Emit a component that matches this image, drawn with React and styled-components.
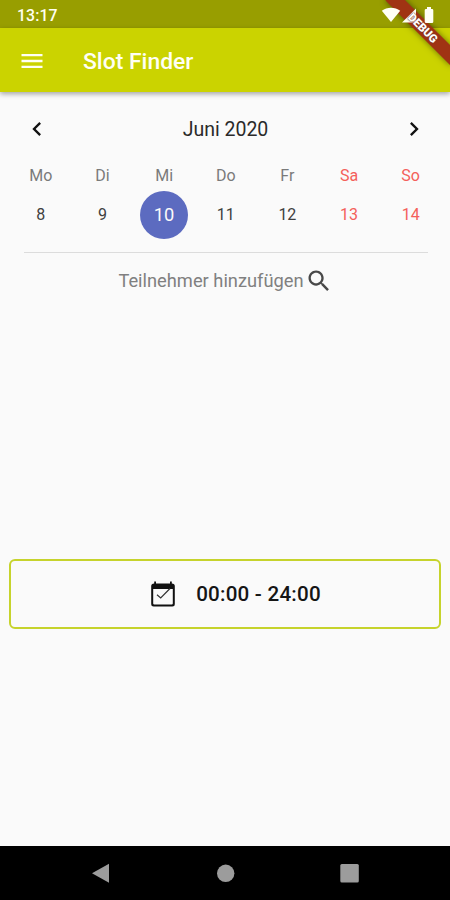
import styled, { createGlobalStyle } from 'styled-components';

const GlobalStyle = createGlobalStyle`
  * {
    box-sizing: border-box;
  }

  body {
    margin: 0;
    background-color: #fafafa;
    font-family: Roboto, sans-serif;
  }
`;

const Screen = styled.div`
  position: relative;
  display: flex;
  flex-direction: column;
  width: 450px;
  height: 900px;
  overflow: hidden;
  background-color: #fafafa;
`;

const StatusBar = styled.div`
  display: flex;
  justify-content: space-between;
  align-items: center;
  height: 28px;
  padding: 2px 15px 0 17px;
  background-color: #989e00;
  color: #fffff0;
`;

const Clock = styled.span`
  font-size: 15.8px;
  font-weight: 500;
  letter-spacing: 0.1px;
`;

/* the system icons are painted over the debug banner */
const StatusIcons = styled.svg`
  position: relative;
  z-index: 2;
  display: block;
  width: 54px;
  height: 18px;
`;

const AppBar = styled.header`
  display: flex;
  align-items: center;
  flex-shrink: 0;
  height: 64px;
  padding: 1px 18px 0;
  background-color: #cbd300;
  box-shadow: 0 2px 5px rgba(0, 0, 0, 0.35);
`;

const Title = styled.h1`
  margin: 1px 0 0 37px;
  color: #fffff4;
  font-size: 22.9px;
  font-weight: 500;
`;

const Icon = styled.svg`
  display: block;
  flex-shrink: 0;
  width: 28px;
  height: 28px;
  fill: ${(props) => props.$color || '#111'};
`;

const DebugBanner = styled.div`
  position: absolute;
  z-index: 1;
  top: 20.5px;
  right: -18.5px;
  width: 92px;
  height: 14px;
  transform: rotate(45deg);
  background-color: #a03313;
  box-shadow: 0 0 6px rgba(0, 0, 0, 0.5);
`;

const DebugLabel = styled(DebugBanner)`
  z-index: 3;
  background-color: transparent;
  box-shadow: none;
  color: #fff;
  font-size: 11.4px;
  font-weight: 900;
  line-height: 14px;
  text-align: center;
  text-shadow: 0 0 1px #7a3a30, 0 0 2px #7a3a30;
`;

const Content = styled.main`
  display: flex;
  flex-direction: column;
  flex: 1;
  padding: 23px 9px 0;
`;

const MonthRow = styled.div`
  display: flex;
  justify-content: space-between;
  align-items: center;
  height: 28px;
  padding: 0 13px 0 14px;
`;

const MonthLabel = styled.div`
  color: #2a2a2a;
  font-size: 19.5px;
`;

const Week = styled.div`
  display: grid;
  grid-template-columns: repeat(7, 1fr);
  align-items: center;
  justify-items: center;
  padding-left: 1px;
  margin-right: -0.5px;
`;

const WeekDays = styled(Week)`
  height: 24px;
  margin-top: 20px;
`;

const Days = styled(Week)`
  height: 48px;
  margin-top: 3.5px;
`;

const WeekDay = styled.span`
  color: ${(props) => (props.$weekend ? '#f4605b' : '#7a7a7a')};
  font-size: 16px;
`;

const Day = styled.span`
  display: flex;
  justify-content: center;
  align-items: center;
  width: 48px;
  height: 48px;
  border-radius: 50%;
  background-color: ${(props) => (props.$selected ? '#5c6bc0' : 'transparent')};
  color: ${(props) => (props.$selected ? '#fafafa' : props.$weekend ? '#f4605b' : '#404040')};
  font-size: ${(props) => (props.$selected ? '18.3px' : '16px')};
`;

const Divider = styled.hr`
  width: 404px;
  height: 1px;
  margin: 13.5px 13px 0 15px;
  border: 0;
  background-color: #dcdcdc;
`;

const SearchRow = styled.div`
  display: flex;
  justify-content: center;
  align-items: center;
  height: 28px;
  margin-top: 13px;
  color: #808080;
  font-size: 18.3px;

  svg {
    margin: 1px -1px 0 1px;
  }
`;

const SlotButton = styled.button`
  display: flex;
  justify-content: center;
  align-items: center;
  gap: 19px;
  height: 70px;
  margin: 265px 0 0;
  padding: 0 0 0 20px;
  border: 2px solid #c6d32c;
  border-radius: 6px;
  background-color: transparent;
  color: #151515;
  font-family: inherit;
  font-size: 20.6px;
  font-weight: 500;
  letter-spacing: 0.23px;
`;

const NavBar = styled.nav`
  flex-shrink: 0;
  height: 54px;
  background-color: #000;
`;

const NavIcons = styled.svg`
  display: block;
  width: 450px;
  height: 54px;
  fill: #9c9c9c;
`;

const days = [
  { name: 'Mo', date: 8 },
  { name: 'Di', date: 9 },
  { name: 'Mi', date: 10, selected: true },
  { name: 'Do', date: 11 },
  { name: 'Fr', date: 12 },
  { name: 'Sa', date: 13, weekend: true },
  { name: 'So', date: 14, weekend: true },
];

function App() {
  return (
    <Screen>
      <GlobalStyle />
      <StatusBar>
        <Clock>13:17</Clock>
        <StatusIcons viewBox="0 0 54 18" fill="#fffff4">
          <path d="M0.8 4.8C6 0.6 14 0.6 19.2 4.8L10 16Z" />
          <path d="M35 2.500V16.500H21Z" />
          <path d="M46 1h4v2h1q1.300 0 1.300 1.300v11.400q0 1.300-1.300 1.300h-6q-1.300 0-1.300-1.300V4.300Q43.700 3 45 3h1Z" />
        </StatusIcons>
      </StatusBar>
      <AppBar>
        <Icon viewBox="0 0 24 24" $color="#fffff4">
          <path d="M3 18h18v-2H3v2zm0-5h18v-2H3v2zm0-7v2h18V6H3z" />
        </Icon>
        <Title>Slot Finder</Title>
      </AppBar>
      <Content>
        <MonthRow>
          <Icon viewBox="0 0 24 24">
            <path d="M15.410 7.410 14 6l-6 6 6 6 1.410-1.410L10.830 12z" />
          </Icon>
          <MonthLabel>Juni 2020</MonthLabel>
          <Icon viewBox="0 0 24 24">
            <path d="M10 6 8.590 7.410 13.170 12l-4.580 4.590L10 18l6-6z" />
          </Icon>
        </MonthRow>
        <WeekDays>
          {days.map((day) => (
            <WeekDay key={day.name} $weekend={day.weekend}>{day.name}</WeekDay>
          ))}
        </WeekDays>
        <Days>
          {days.map((day) => (
            <Day key={day.date} $weekend={day.weekend} $selected={day.selected}>{day.date}</Day>
          ))}
        </Days>
        <Divider />
        <SearchRow>
          Teilnehmer hinzufügen
          <Icon viewBox="0 0 24 24" $color="#484848">
            <path d="M15.500 14h-.79l-.28-.27C15.410 12.590 16 11.110 16 9.500 16 5.910 13.090 3 9.500 3S3 5.910 3 9.500 5.910 16 9.500 16c1.610 0 3.090-.59 4.230-1.570l.27.28v.79l5 4.990L20.490 19l-4.990-5zm-6 0C7.010 14 5 11.990 5 9.500S7.010 5 9.500 5 14 7.010 14 9.500 11.990 14 9.500 14z" />
          </Icon>
        </SearchRow>
        <SlotButton>
          <Icon viewBox="0 0 28 28">
            <path fillRule="evenodd" d="M5.200 3.500V1.500h1.800v2h14V1.500h1.800v2q3 0 3 2.500v18q0 2.500-2.500 2.500H4.700q-2.500 0-2.500-2.500V6Q2.200 3.500 5.200 3.500ZM4.200 9v14.500q0 1 1 1h17.600q1 0 1-1V9Z" />
            <path d="m8 14.800 3.700 3.200L21 8.500" fill="none" stroke="#333" strokeWidth="1.200" />
          </Icon>
          00:00 - 24:00
        </SlotButton>
      </Content>
      <NavBar>
        <NavIcons viewBox="0 0 450 54">
          <path d="M92 27.300 109 17.800v19Z" />
          <circle cx="225.700" cy="27.300" r="8.700" />
          <rect x="340.300" y="18" width="18.500" height="18.500" rx="1.500" />
        </NavIcons>
      </NavBar>
      <DebugBanner />
      <DebugLabel>DEBUG</DebugLabel>
    </Screen>
  );
}

export default App;
